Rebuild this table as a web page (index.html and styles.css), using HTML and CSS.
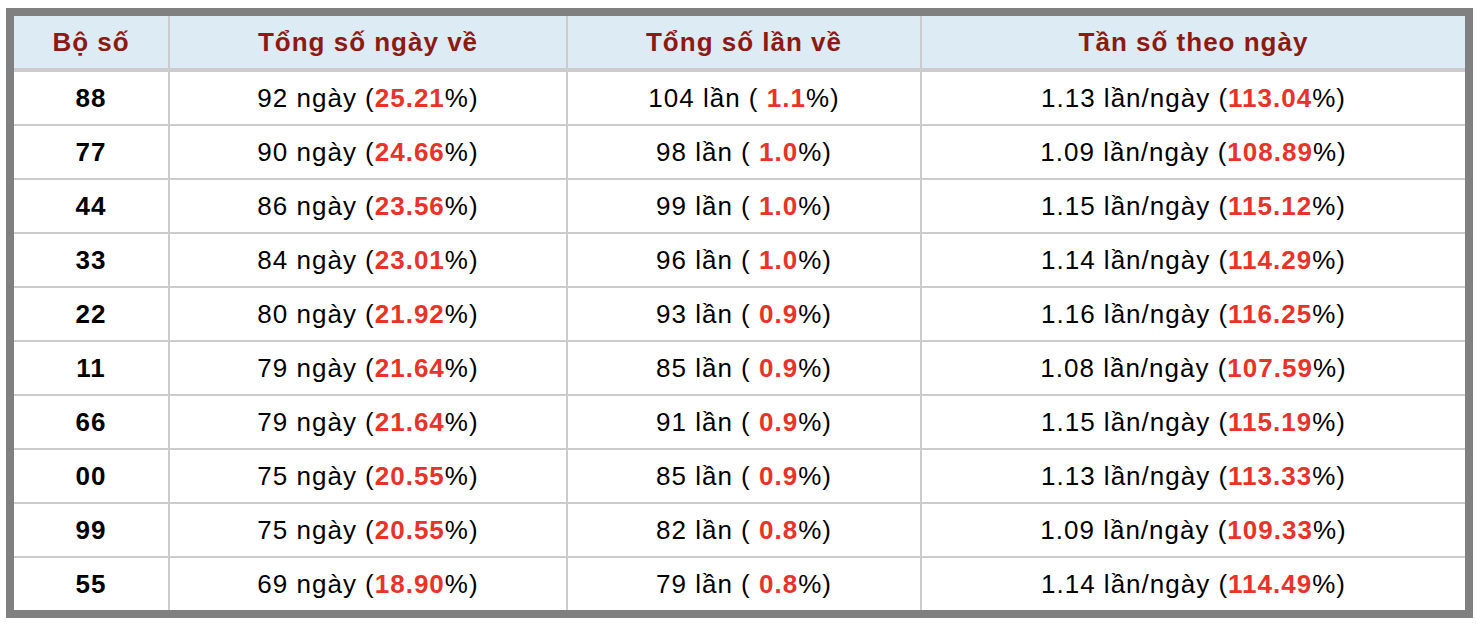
FILE: index.html
```html
<!DOCTYPE html>
<html lang="vi">
<head>
<meta charset="utf-8">
<title>Thống kê bộ số</title>
<link rel="stylesheet" href="styles.css">
</head>
<body>
<div class="frame">
<table class="stats">
<colgroup>
<col class="c1"><col class="c2"><col class="c3"><col class="c4">
</colgroup>
<thead>
<tr><th>Bộ số</th><th>Tổng số ngày về</th><th>Tổng số lần về</th><th>Tần số theo ngày</th></tr>
</thead>
<tbody>
<tr><td class="num">88</td><td>92 ngày (<b>25.21</b>%)</td><td>104 lần ( <b>1.1</b>%)</td><td>1.13 lần/ngày (<b>113.04</b>%)</td></tr>
<tr><td class="num">77</td><td>90 ngày (<b>24.66</b>%)</td><td>98 lần ( <b>1.0</b>%)</td><td>1.09 lần/ngày (<b>108.89</b>%)</td></tr>
<tr><td class="num">44</td><td>86 ngày (<b>23.56</b>%)</td><td>99 lần ( <b>1.0</b>%)</td><td>1.15 lần/ngày (<b>115.12</b>%)</td></tr>
<tr><td class="num">33</td><td>84 ngày (<b>23.01</b>%)</td><td>96 lần ( <b>1.0</b>%)</td><td>1.14 lần/ngày (<b>114.29</b>%)</td></tr>
<tr><td class="num">22</td><td>80 ngày (<b>21.92</b>%)</td><td>93 lần ( <b>0.9</b>%)</td><td>1.16 lần/ngày (<b>116.25</b>%)</td></tr>
<tr><td class="num">11</td><td>79 ngày (<b>21.64</b>%)</td><td>85 lần ( <b>0.9</b>%)</td><td>1.08 lần/ngày (<b>107.59</b>%)</td></tr>
<tr><td class="num">66</td><td>79 ngày (<b>21.64</b>%)</td><td>91 lần ( <b>0.9</b>%)</td><td>1.15 lần/ngày (<b>115.19</b>%)</td></tr>
<tr><td class="num">00</td><td>75 ngày (<b>20.55</b>%)</td><td>85 lần ( <b>0.9</b>%)</td><td>1.13 lần/ngày (<b>113.33</b>%)</td></tr>
<tr><td class="num">99</td><td>75 ngày (<b>20.55</b>%)</td><td>82 lần ( <b>0.8</b>%)</td><td>1.09 lần/ngày (<b>109.33</b>%)</td></tr>
<tr><td class="num">55</td><td>69 ngày (<b>18.90</b>%)</td><td>79 lần ( <b>0.8</b>%)</td><td>1.14 lần/ngày (<b>114.49</b>%)</td></tr>
</tbody>
</table>
</div>
</body>
</html>
```
FILE: styles.css
```css
html, body {
  margin: 0;
  padding: 0;
  background: #ffffff;
}
body {
  padding: 8px 0 0 6px;
  font-family: "Liberation Sans", Arial, Helvetica, sans-serif;
}
.frame {
  width: 1451px;
  border: 8px solid #808080;
  background: #ffffff;
}
.stats {
  width: 100%;
  border-collapse: collapse;
  table-layout: fixed;
  font-size: 26px;
  letter-spacing: 1px;
  color: #000;
}
.c1 { width: 155px; }
.c2 { width: 398px; }
.c3 { width: 354px; }
.c4 { width: 544px; }
.stats th {
  height: 52px;
  padding: 0;
  background: #ddebf4;
  color: #8c1a12;
  font-weight: bold;
  text-align: center;
  border-left: 2px solid #cccccc;
  border-bottom: 4px solid #cccccc;
}
.stats td {
  height: 52px;
  padding: 0;
  text-align: center;
  border-left: 2px solid #cccccc;
  border-top: 2px solid #cccccc;
}
.stats tbody tr:first-child td { border-top: 0; }
.stats th:first-child, .stats td:first-child { border-left: 0; }
.stats td.num { font-weight: bold; }
.stats b {
  color: #e8332a;
  font-weight: bold;
}
```
